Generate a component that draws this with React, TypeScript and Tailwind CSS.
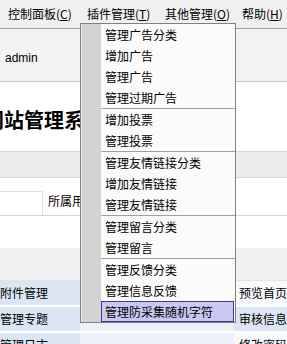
import React from "react";

const groups: string[][] = [
  ["管理广告分类", "增加广告", "管理广告", "管理过期广告"],
  ["增加投票", "管理投票"],
  ["管理友情链接分类", "增加友情链接", "管理友情链接"],
  ["管理留言分类", "管理留言"],
  ["管理反馈分类", "管理信息反馈", "管理防采集随机字符"],
];

function Acc({ label, k }: { label: string; k: string }) {
  return (
    <span>
      {label}(<span className="underline">{k}</span>)
    </span>
  );
}

export default function App() {
  return (
    <div
      className="relative w-[287px] h-[344px] overflow-hidden bg-white text-[12px] text-black"
      style={{ fontFamily: '"Noto Sans CJK SC", "Noto Sans", sans-serif' }}
    >
      {/* top menu bar */}
      <div className="flex h-[29px] items-center border-b border-[#a0a0a0] bg-[#f0f0f0] pl-[8px] pb-[1px] leading-none">
        <div className="w-[79px] shrink-0"><Acc label="控制面板" k="C" /></div>
        <div className="w-[78px] shrink-0"><Acc label="插件管理" k="T" /></div>
        <div className="w-[77px] shrink-0"><Acc label="其他管理" k="O" /></div>
        <div className="shrink-0 whitespace-nowrap"><Acc label="帮助" k="H" /></div>
      </div>

      {/* admin area */}
      <div className="flex h-[53px] items-center border-b border-[#c8c8c8] bg-[#f3f3f3] pl-[5px] pt-[6px]" style={{ fontFamily: '"Liberation Sans", sans-serif' }}>
        admin
      </div>

      {/* title */}
      <div className="flex h-[70px] items-center border-b border-[#d6d6d6] bg-white pt-[6px]">
        <div className="ml-[-16px] whitespace-nowrap text-[20px] font-bold leading-none tracking-[0px]">网站管理系统</div>
      </div>

      {/* gray band */}
      <div className="h-[26px] border-b border-[#d4d4d4] bg-[#ececec]" />

      {/* table row */}
      <div className="flex h-[38px] border-b border-[#d4d4d4] bg-white">
        <div className="mt-[13px] w-[43px] border-t border-r border-[#e2e2e2]" />
        <div className="flex items-center pl-[5px] pt-[8px] whitespace-nowrap">所属用户</div>
      </div>

      <div className="h-[32px] bg-white" />
      <div className="h-[33px] border-b border-[#e4e4e4] bg-[#f1f1f1]" />

      {/* bottom link rows */}
      <div className="flex flex-col gap-[2px] bg-white">
        {[
          ["附件管理", "预览首页", false],
          ["管理专题", "审核信息", true],
          ["管理日志", "修改密码", false],
        ].map(([l, r, blue], i) => (
          <div key={i} className="flex h-[24px]">
            <div className="flex w-[80px] items-center bg-[#dbe5f3] whitespace-nowrap">{l as string}</div>
            <div className="w-[155px] bg-[#eef2f8]" />
            <div className={`flex flex-1 items-center pl-[5px] whitespace-nowrap ${blue ? "bg-[#dbe5f3]" : "bg-[#f7f9fc]"}`}>{r as string}</div>
          </div>
        ))}
      </div>

      {/* dropdown menu */}
      <div className="absolute left-[80px] top-[23px] flex w-[156px] border border-[#808080] bg-[#fbfbfb]">
        <div className="w-[20px] shrink-0 border-l border-[#ececec] bg-[#d3d3d3]" />
        <div className="flex flex-1 flex-col">
          {groups.map((g, gi) => (
            <div key={gi} className={gi > 0 ? "border-t border-[#a0a0a0]" : ""}>
              {g.map((item) => {
                const hl = item === "管理防采集随机字符";
                return (
                  <div
                    key={item}
                    className={`flex h-[21px] items-center whitespace-nowrap leading-none ${
                      hl ? "mr-[1px] border border-[#3c3c8c] bg-[#c8c8f2] pl-[3px]" : "pl-[4px]"
                    }`}
                  >
                    {item}
                  </div>
                );
              })}
            </div>
          ))}
        </div>
      </div>
    </div>
  );
}
